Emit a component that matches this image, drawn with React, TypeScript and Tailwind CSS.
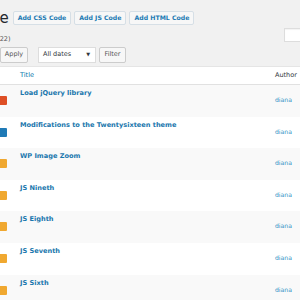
import React from "react";

const rows = [
  { title: "Load jQuery library", type: "html" },
  { title: "Modifications to the Twentysixteen theme", type: "css" },
  { title: "WP Image Zoom", type: "js" },
  { title: "JS Nineth", type: "js" },
  { title: "JS Eighth", type: "js" },
  { title: "JS Seventh", type: "js" },
  { title: "JS Sixth", type: "js" },
];

const badgeColor: Record<string, string> = {
  html: "bg-[#de4f25]",
  css: "bg-[#1f7ab6]",
  js: "bg-[#f0a830]",
};

function ActionButton({ label }: { label: string }) {
  return (
    <span className="h-[14px] px-[4px] flex items-center bg-[#f7f7f7] border border-[#d6dfe6] rounded-[2px] text-[6.2px] font-bold text-[#1b7ab3]">
      {label}
    </span>
  );
}

export default function App() {
  return (
    <div
      className="w-[300px] h-[300px] overflow-hidden bg-[#f1f1f1] text-[#32373c]"
      style={{ fontFamily: '"DejaVu Sans", Verdana, sans-serif' }}
    >
      {/* heading + add buttons */}
      <div className="flex items-center h-[14px] mt-[11px] ml-[-92px] gap-[3px]">
        <h1 className="text-[15px] leading-none text-[#23282d] mr-[1px]">Custom Code</h1>
        <ActionButton label="Add CSS Code" />
        <ActionButton label="Add JS Code" />
        <ActionButton label="Add HTML Code" />
      </div>

      {/* status count + search */}
      <div className="flex items-center justify-between h-[14px] mt-[3px]">
        <span className="text-[6.5px] text-[#555] ml-[-13px] mt-[9px]">All (22)</span>
        <span className="w-[40px] h-[14px] bg-white border border-[#ddd] mr-[-24px] shadow-[inset_0_1px_1px_rgba(0,0,0,0.05)]" />
      </div>

      {/* tablenav */}
      <div className="flex items-center h-[16px] mt-[5px] gap-[10px]">
        <span className="w-[28px] h-[16px] flex items-center justify-center bg-[#f7f7f7] border border-[#ccc] rounded-[2px] text-[6.5px] text-[#555]">
          Apply
        </span>
        <div className="flex items-center gap-[3px]">
          <span className="w-[58px] h-[16px] flex items-center justify-between pl-[4px] pr-[5px] bg-white border border-[#ddd] text-[6.5px] text-[#32373c]">
            All dates
            <span className="text-[5px]">▼</span>
          </span>
          <span className="w-[27px] h-[16px] flex items-center justify-center bg-[#f7f7f7] border border-[#ccc] rounded-[2px] text-[6.5px] text-[#555]">
            Filter
          </span>
        </div>
      </div>

      {/* table */}
      <div className="mt-[3px] bg-white border-t border-[#e5e5e5]">
        <div className="flex items-center h-[18px] border-b border-[#e1e1e1] text-[6.5px]">
          <span className="w-[20px]" />
          <span className="flex-1 text-[#0073aa]">Title</span>
          <span className="w-[25px] text-[#32373c]">Author</span>
        </div>
        {rows.map((row, i) => (
          <div
            key={row.title}
            className={`flex h-[31.6px] ${i % 2 === 0 ? "bg-[#f9f9f9]" : "bg-white"}`}
          >
            <div className="w-[20px] pt-[11px]">
              <span className={`block w-[7px] h-[9px] rounded-r-[1px] ${badgeColor[row.type]}`} />
            </div>
            <div className="flex-1 pt-[3px] leading-[10px] text-[6.6px] font-bold text-[#1a77ad]">
              {row.title}
            </div>
            <div className="w-[25px] pt-[10px] leading-[10px] text-[6.1px] text-[#2e8fc4]">diana</div>
          </div>
        ))}
      </div>
    </div>
  );
}
